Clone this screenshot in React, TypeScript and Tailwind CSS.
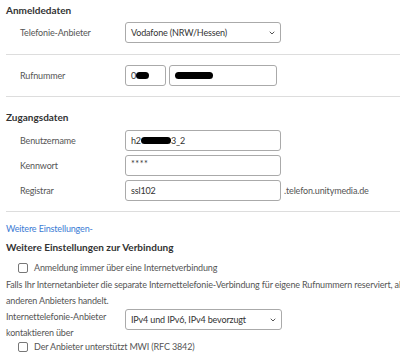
import { ChevronDown } from "lucide-react";

function Blob({ w }: { w: number }) {
	return <span className="inline-block h-[7px] bg-black rounded-full align-middle" style={{ width: w }} />;
}

function Select({ value, width }: { value: string; width: string }) {
	return (
		<div
			className={`${width} h-[21px] flex items-center justify-between border border-[#aaaaaa] rounded-[3px] bg-white pl-[5px] pr-[4px] text-[#333]`}
		>
			<span className="whitespace-nowrap">{value}</span>
			<ChevronDown size={8} strokeWidth={3} className="text-[#555]" />
		</div>
	);
}

function Field({ children, width }: { children?: React.ReactNode; width: string }) {
	return (
		<div
			className={`${width} h-[21px] flex items-center border border-[#aaaaaa] rounded-[3px] bg-white px-[5px] text-[#333] whitespace-nowrap`}
		>
			{children}
		</div>
	);
}

function Checkbox() {
	return <span className="inline-block w-[10px] h-[10px] border border-[#777] rounded-[2px] bg-white" />;
}

export default function App() {
	return (
		<div
			className="w-[400px] h-[360px] overflow-hidden bg-white text-[9px] leading-[14px] tracking-[-0.15px] text-[#555]"
			style={{ fontFamily: "Lato, 'Noto Sans', sans-serif" }}
		>
			<div className="w-[640px] pl-[6px]">
				<h2 className="pt-[3px] text-[10px] font-bold text-[#333] leading-[14px] tracking-normal">Anmeldedaten</h2>

				<div className="mt-[5px] flex items-center pl-[14px]">
					<div className="w-[105px]">Telefonie-Anbieter</div>
					<Select value="Vodafone (NRW/Hessen)" width="w-[156px]" />
				</div>

				<div className="mt-[11px] border-t border-[#dddddd]" />

				<div className="mt-[10px] flex items-center pl-[14px]">
					<div className="w-[105px]">Rufnummer</div>
					<Field width="w-[41px]">
						0<Blob w={13} />
					</Field>
					<Field width="w-[108px] ml-[3px]">
						<Blob w={38} />
					</Field>
				</div>

				<div className="mt-[10px] border-t border-[#dddddd]" />

				<h2 className="mt-[13px] text-[10px] font-bold text-[#333] leading-[14px] tracking-normal">Zugangsdaten</h2>

				<div className="mt-[6px] flex flex-col gap-[4px] pl-[14px]">
					<div className="flex items-center">
						<div className="w-[105px]">Benutzername</div>
						<Field width="w-[156px]">
							h2<Blob w={30} />3_2
						</Field>
					</div>
					<div className="flex items-center">
						<div className="w-[105px]">Kennwort</div>
						<Field width="w-[156px]">
							<span className="tracking-[0.5px] -mt-[3px]">****</span>
						</Field>
					</div>
					<div className="flex items-center">
						<div className="w-[105px]">Registrar</div>
						<Field width="w-[156px]">ssl102</Field>
						<span className="ml-[3px]">.telefon.unitymedia.de</span>
					</div>
				</div>

				<div className="mt-[10px] border-t border-[#dddddd]" />

				<div className="mt-[10px] text-[#3b7bd4]">Weitere Einstellungen-</div>

				<h2 className="mt-[4px] text-[10px] font-bold text-[#333] leading-[14px] tracking-normal">
					Weitere Einstellungen zur Verbindung
				</h2>

				<label className="mt-[7px] ml-[12px] flex items-center gap-[6px]">
					<Checkbox />
					<span>Anmeldung immer über eine Internetverbindung</span>
				</label>

				<p className="mt-[2px] leading-[16px] whitespace-nowrap">
					Falls Ihr Internetanbieter die separate Internettelefonie-Verbindung für eigene Rufnummern reserviert, aktivieren Sie
					diese Option, wenn es sich um eine Telefonie-Verbindung eines
					<br />
					anderen Anbieters handelt.
				</p>

				<div className="flex items-start">
					<div className="w-[119px] leading-[16px]">
						Internettelefonie-Anbieter
						<br />
						kontaktieren über
					</div>
					<Select value="IPv4 und IPv6, IPv4 bevorzugt" width="w-[157px] h-[20px]" />
				</div>

				<label className="-mt-[1px] ml-[12px] flex items-center gap-[6px] h-[14px]">
					<Checkbox />
					<span>Der Anbieter unterstützt MWI (RFC 3842)</span>
				</label>
			</div>
		</div>
	);
}
